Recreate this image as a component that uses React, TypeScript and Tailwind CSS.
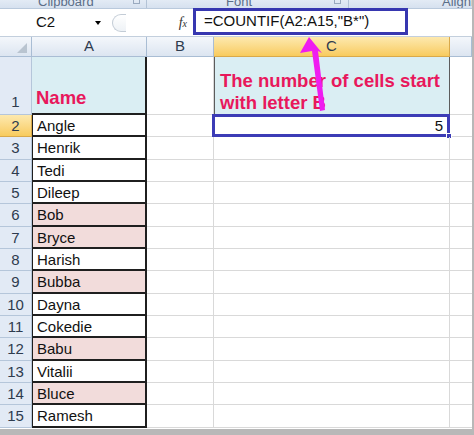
import React from 'react'

type Row = { name: string; hit: boolean }

const rows: Row[] = [
  { name: 'Angle', hit: false },
  { name: 'Henrik', hit: false },
  { name: 'Tedi', hit: false },
  { name: 'Dileep', hit: false },
  { name: 'Bob', hit: true },
  { name: 'Bryce', hit: true },
  { name: 'Harish', hit: false },
  { name: 'Bubba', hit: true },
  { name: 'Dayna', hit: false },
  { name: 'Cokedie', hit: false },
  { name: 'Babu', hit: true },
  { name: 'Vitalii', hit: false },
  { name: 'Bluce', hit: true },
  { name: 'Ramesh', hit: false },
]

function Ribbon() {
  return (
    <div className="flex h-[9px] overflow-hidden bg-gradient-to-b from-[#e3ebf5] to-[#d6e1ef] border-b border-[#b9c9dc] text-[13px] leading-none text-[#5b6e88]">
      <div className="relative w-[147px] border-r border-[#b3c3d6]">
        <span className="absolute left-[38px] -top-[5px]">Clipboard</span>
        <span className="absolute left-[133px] -top-[3px] w-[7px] h-[7px] border border-[#9aaabf]" />
      </div>
      <div className="relative w-[202px] border-r border-[#b3c3d6]">
        <span className="absolute left-[79px] -top-[5px]">Font</span>
        <span className="absolute left-[187px] -top-[3px] w-[7px] h-[7px] border border-[#9aaabf]" />
      </div>
      <div className="relative flex-1">
        <span className="absolute left-[93px] -top-[5px]">Alignm</span>
      </div>
    </div>
  )
}

function FormulaBar() {
  return (
    <div className="relative flex h-[28px] bg-white border-b border-[#c3cfdd] text-[15px] text-[#111]">
      <div className="flex items-center w-[106px] pl-[36px]">
        <span>C2</span>
        <span className="ml-auto mr-[5px] w-0 h-0 border-l-[3px] border-r-[3px] border-t-[4px] border-l-transparent border-r-transparent border-t-black" />
      </div>
      <div className="flex items-center w-[87px]">
        <div className="ml-[6px] w-[14px] h-[18px] rounded-l-full border border-r-0 border-[#c3ccd6] bg-gradient-to-b from-white to-[#eef2f6]" />
        <span className="ml-auto mr-[6px] italic font-['Liberation_Serif',serif] text-[14px] text-[#333]">
          f<span className="text-[10px]">x</span>
        </span>
      </div>
      <div className="-mt-[1px] h-[27px] w-[215px] flex items-center pl-[8px] border-[3px] border-[#3737b0] whitespace-nowrap">
        =COUNTIF(A2:A15,"B*")
      </div>
      <div className="flex-1" />
    </div>
  )
}

function HeaderRow() {
  const hdr = 'flex items-center justify-center border-r border-b border-[#a9bdd4] bg-gradient-to-b from-[#f4f7fb] to-[#dce5f1] text-[15px] text-[#2e3b4e]'
  return (
    <div className="flex h-[20px]">
      <div className={`w-[32px] justify-end items-end pr-[4px] pb-[3px] ${hdr}`}>
        <svg width="10" height="10" viewBox="0 0 10 10">
          <polygon points="10,0 10,10 0,10" fill="#b9c4d0" />
        </svg>
      </div>
      <div className={`w-[115px] ${hdr}`}>A</div>
      <div className={`w-[67px] ${hdr}`}>B</div>
      <div className="w-[236px] flex items-center justify-center border-r border-b border-[#d9a94a] bg-gradient-to-b from-[#fde9ae] to-[#f8cb5c] text-[15px] text-[#2e3b4e]">
        C
      </div>
      <div className={`flex-1 ${hdr}`} />
    </div>
  )
}

function RowNum({ n, active }: { n: number; active?: boolean }) {
  return (
    <div
      className={`w-[32px] h-full flex items-center justify-center pt-[1px] text-[15px] text-[#2e3b4e] border-r border-b ${
        active
          ? 'bg-gradient-to-b from-[#fde9ae] to-[#f8cb5c] border-[#d9a94a]'
          : 'bg-[#e2eaf5] border-[#b5c6da]'
      }`}
    >
      {n}
    </div>
  )
}

export default function App() {
  return (
    <div className="relative w-[474px] h-[435px] overflow-hidden bg-white font-['Liberation_Sans',Arial,sans-serif] border-r-2 border-b-[6px] border-[#b8b8b8]">
      <Ribbon />
      <FormulaBar />
      <HeaderRow />

      {/* row 1 */}
      <div className="flex h-[58px]">
        <div className="w-[32px] h-full flex items-end justify-center pb-[1px] text-[15px] text-[#2e3b4e] bg-[#e2eaf5] border-r border-b border-[#b5c6da]">
          1
        </div>
        <div className="w-[115px] h-full flex items-end pl-[4px] pb-[1px] bg-[#daeef3] border-r-2 border-b-2 border-[#1f1f1f] text-[18.5px] font-bold text-[#e8185c]">
          Name
        </div>
        <div className="w-[67px] h-full border-r border-b border-[#d9d9d9]" />
        <div className="w-[236px] h-full flex items-end pl-[5px] pb-[1px] bg-[#daeef3] border-l border-r border-[#5c5c5c] text-[18.5px] leading-[22px] font-bold text-[#e8185c]">
          The number of cells start
          <br />
          with letter B
        </div>
        <div className="flex-1 h-full border-b border-[#d9d9d9]" />
      </div>

      {rows.map((r, i) => (
        <div key={r.name} className="flex h-[22.35px]">
          <RowNum n={i + 2} active={i === 0} />
          <div
            className={`w-[115px] h-full flex items-center pt-[2px] pl-[4px] text-[15px] text-[#111] border-l border-r-2 border-b-2 border-[#1f1f1f] ${
              r.hit ? 'bg-[#f2dcdb]' : 'bg-white'
            }`}
          >
            {r.name}
          </div>
          <div className="w-[67px] h-full border-r border-b border-[#d9d9d9]" />
          <div className="relative w-[236px] h-full flex items-center justify-end pt-[2px] pr-[6px] text-[15px] text-[#111] border-r border-b border-[#d9d9d9]">
            {i === 0 && (
              <>
                5
                <div className="absolute -left-[2px] -top-[1px] -right-[1px] -bottom-[1px] border-[3px] border-[#3c3cb6]" />
                <div className="absolute -right-[3px] -bottom-[3px] w-[6px] h-[6px] bg-[#3c3cb6] border border-white" />
              </>
            )}
          </div>
          <div className="flex-1 h-full border-b border-[#d9d9d9]" />
        </div>
      ))}

      {/* pointer arrow from the result header to the formula */}
      <svg className="absolute left-0 top-0 pointer-events-none" width="474" height="435">
        <polygon points="309,37 300,53 312,51 320,111 325,110 318,51 322,53" fill="#ef1cf0" />
      </svg>
    </div>
  )
}
